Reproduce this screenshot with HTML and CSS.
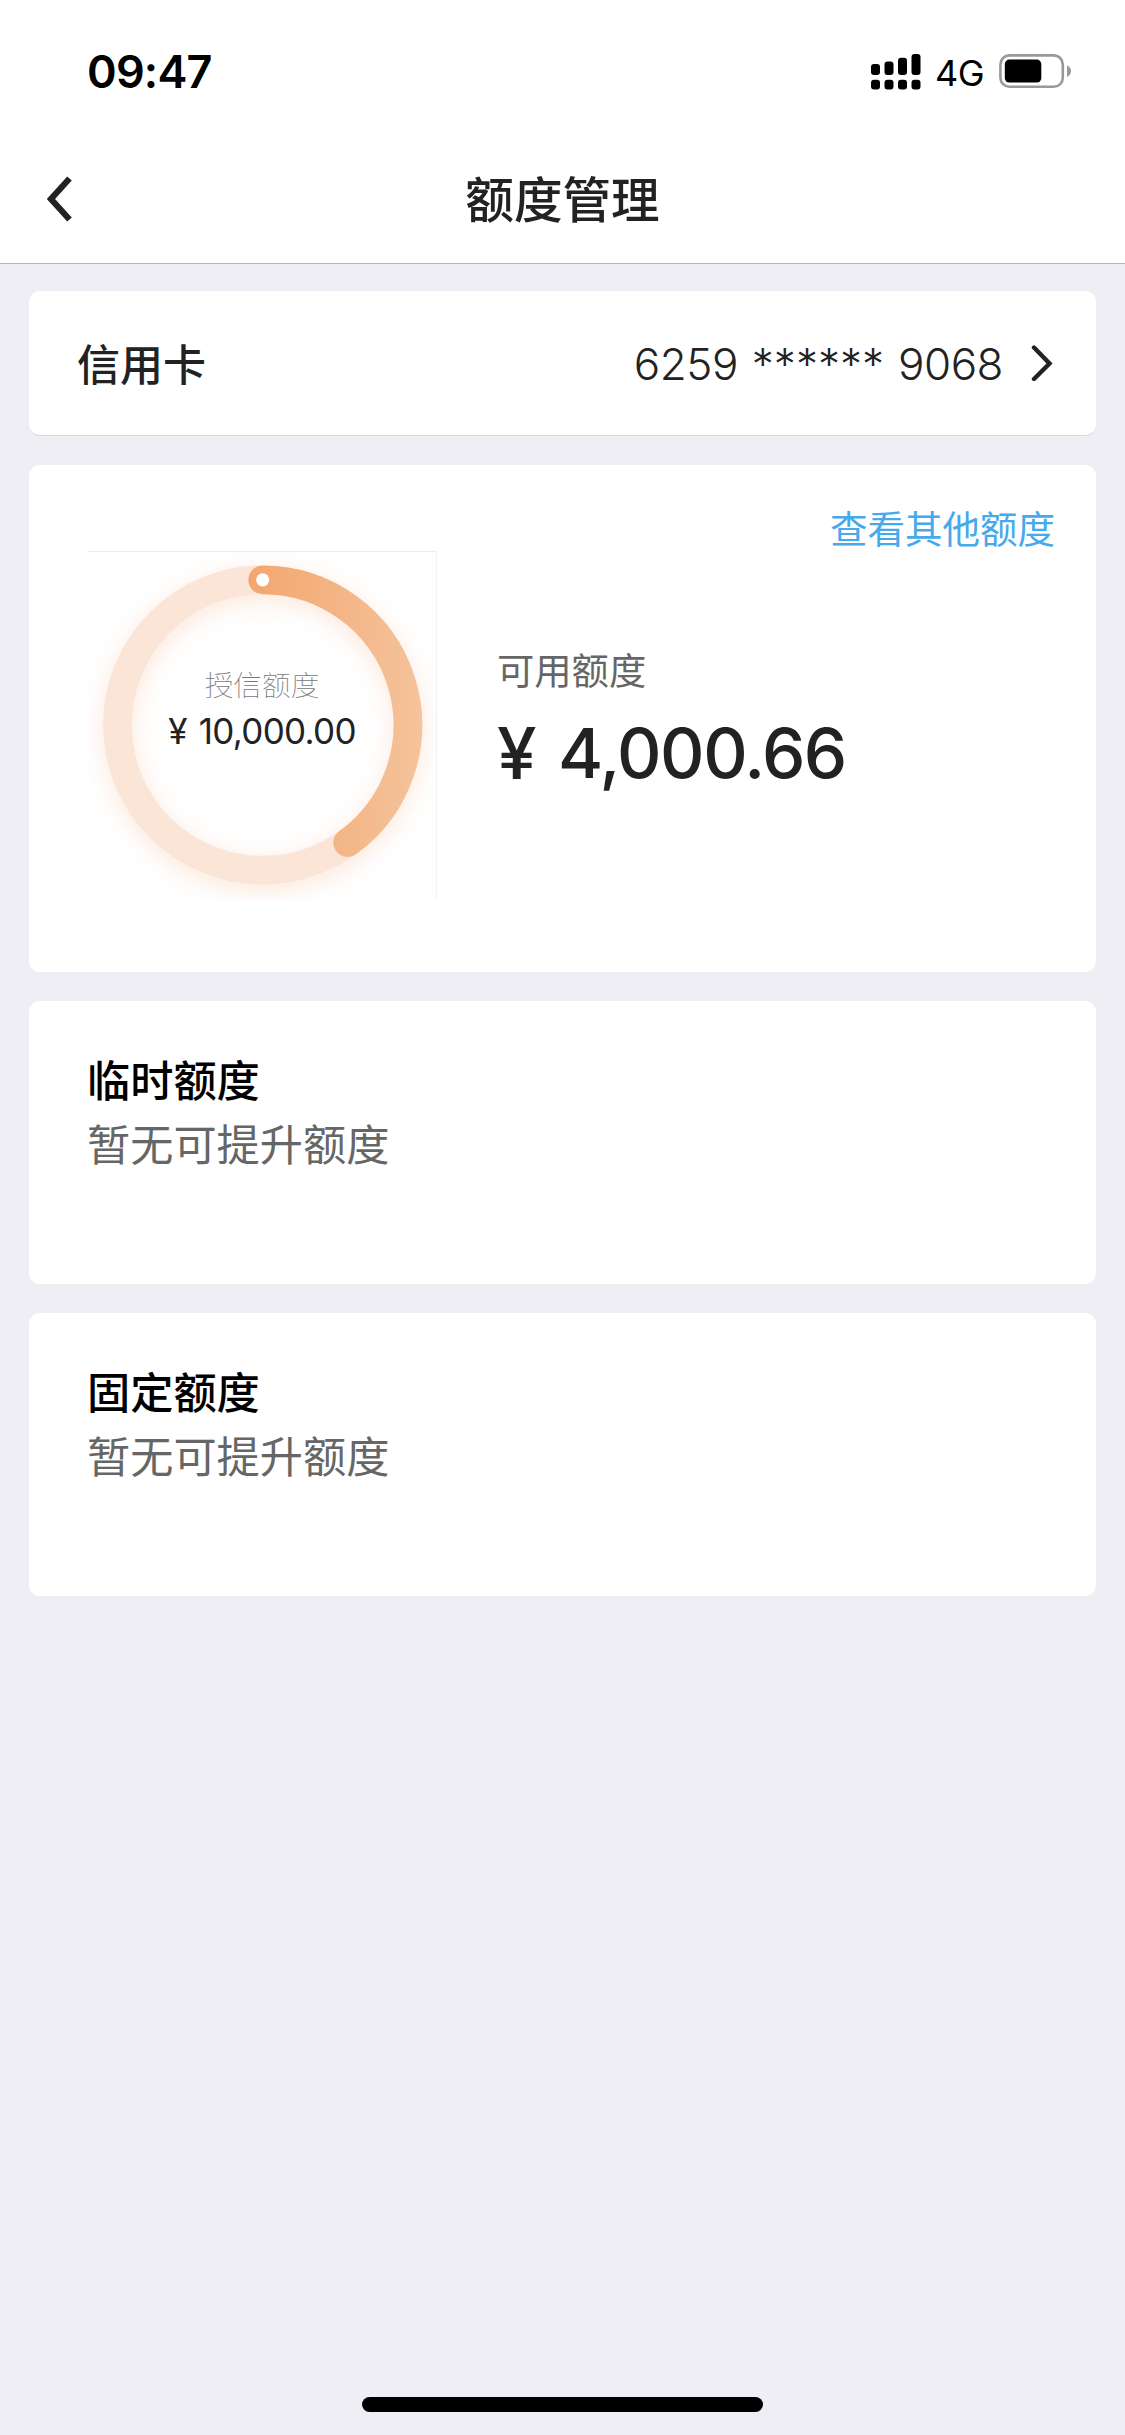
FILE: index.html
```html
<!DOCTYPE html>
<html lang="zh-CN">
<head>
<meta charset="utf-8">
<title>额度管理</title>
<link rel="stylesheet" href="styles.css">
</head>
<body>
<div class="screen">
  <header class="header">
    <div class="status-bar">
      <span class="time">09:47</span>
      <div class="status-icons">
        <svg class="signal" width="50" height="36" viewBox="0 0 50 36">
          <rect x="0" y="10" width="9" height="11" rx="3"/>
          <rect x="13.5" y="7.5" width="9" height="13.5" rx="3"/>
          <rect x="27" y="3.7" width="9" height="17.3" rx="3"/>
          <rect x="40.5" y="0" width="9" height="21" rx="3"/>
          <rect x="0" y="25.7" width="9" height="9.8" rx="3"/>
          <rect x="13.5" y="25.7" width="9" height="9.8" rx="3"/>
          <rect x="27" y="25.7" width="9" height="9.8" rx="3"/>
          <rect x="40.5" y="25.7" width="9" height="9.8" rx="3"/>
        </svg>
        <span class="network">4G</span>
        <svg class="battery" width="73" height="36" viewBox="0 0 73 36">
          <rect x="1.4" y="1.4" width="62.4" height="31.4" rx="9" fill="none" stroke="#999" stroke-width="2.6"/>
          <rect x="5.8" y="5.6" width="36.5" height="23" rx="4.5"/>
          <path d="M68 11.5Q72 13.500 72 17.200T68 23Z" fill="#999"/>
        </svg>
      </div>
    </div>
    <nav class="nav-bar">
      <svg class="back" width="26" height="46" viewBox="0 0 26 46">
        <path d="M22.500 2.500 4 23 22.500 43.500" fill="none" stroke="#222" stroke-width="6.200"/>
      </svg>
      <h1 class="title">额度管理</h1>
    </nav>
  </header>
  <main class="content">
    <section class="card card-select">
      <span class="card-type">信用卡</span>
      <span class="card-number"><span>6259</span><span class="mask">******</span><span>9068</span></span>
      <svg class="chevron" width="22" height="36" viewBox="0 0 22 36">
        <path d="M3 2.500 18.500 18.500 3 34" fill="none" stroke="#222" stroke-width="4.400" stroke-linecap="round"/>
      </svg>
    </section>
    <section class="card limit-card">
      <a class="other-limits">查看其他额度</a>
      <div class="limit-body">
        <div class="gauge">
          <svg class="ring" width="348" height="348" viewBox="0 0 348 348">
            <defs>
              <linearGradient id="used" gradientUnits="userSpaceOnUse" x1="160" y1="0" x2="334" y2="0">
                <stop offset="0" stop-color="#f2a66d"/>
                <stop offset="1" stop-color="#f5c39c"/>
              </linearGradient>
              <filter id="glow" x="-20%" y="-20%" width="140%" height="140%">
                <feGaussianBlur stdDeviation="12"/>
              </filter>
            </defs>
            <circle cx="175" cy="179" r="145.200" fill="none" stroke="#f9c9a9" stroke-opacity=".42" stroke-width="29" filter="url(#glow)"/>
            <circle cx="174.700" cy="173" r="145.200" fill="none" stroke="#fbe5d7" stroke-width="28.700"/>
            <path d="M174.700 27.800A145.200 145.200 0 0 1 259.700 290.700" fill="none" stroke="url(#used)" stroke-width="28.700" stroke-linecap="round"/>
            <circle cx="174.700" cy="27.800" r="6.600" fill="#fff"/>
          </svg>
          <div class="gauge-text">
            <span class="gauge-label">授信额度</span>
            <span class="gauge-value"><span>¥</span><span>10,000.00</span></span>
          </div>
        </div>
        <div class="available">
          <span class="available-label">可用额度</span>
          <span class="available-value"><span class="yen">¥</span><span>4,000.66</span></span>
        </div>
      </div>
    </section>
    <section class="card info-card">
      <h2 class="info-title">临时额度</h2>
      <p class="info-text">暂无可提升额度</p>
    </section>
    <section class="card info-card">
      <h2 class="info-title">固定额度</h2>
      <p class="info-text">暂无可提升额度</p>
    </section>
  </main>
  <div class="home-indicator"></div>
</div>
</body>
</html>
```
FILE: styles.css
```css
* { box-sizing: border-box; }

body {
  margin: 0;
  background: #efeef4;
  color: #222;
  font-family: Inter, "Noto Sans CJK SC", sans-serif;
}

h1, h2, p { margin: 0; }

svg { display: block; flex: none; }

.screen {
  width: 1125px;
  height: 2435px;
  display: flex;
  flex-direction: column;
}

.header {
  height: 264px;
  background: #fff;
  border-bottom: 1px solid #b5b5b7;
}

.status-bar {
  height: 143px;
  padding: 0 53px 0 87px;
  display: flex;
  justify-content: space-between;
  color: #000;
}

.time {
  padding-top: 42px;
  font-size: 45px;
  line-height: 60px;
  font-weight: 600;
  letter-spacing: -0.8px;
}

.status-icons {
  padding-top: 54px;
  display: flex;
  align-items: flex-start;
}

.network {
  width: 49px;
  margin: 0 15px 0 14px;
  font-size: 36px;
  line-height: 38px;
  letter-spacing: -0.5px;
}

.nav-bar {
  height: 112px;
  padding: 0 47px;
  display: grid;
  grid-template-columns: 26px 1fr 26px;
  align-items: center;
}

.title {
  padding-top: 3px;
  text-align: center;
  font-size: 48.600px;
  line-height: 60px;
  font-weight: 500;
}

.content {
  padding: 27px 29px 0;
  display: flex;
  flex-direction: column;
  gap: 29px;
}

.card {
  background: #fff;
  border-radius: 11px;
}

.card-select {
  height: 145px;
  padding: 0 43px 0 48px;
  display: flex;
  align-items: center;
  border-bottom: 1px solid #d9d9de;
}

.card-type {
  margin-right: auto;
  padding-top: 4px;
  font-size: 43px;
  line-height: 60px;
  font-weight: 500;
}

.card-number {
  display: flex;
  gap: 14px;
  margin-right: 28px;
  padding-top: 2px;
  font-size: 44px;
  line-height: 60px;
  font-weight: 350;
  letter-spacing: -0.5px;
}

.mask { letter-spacing: 0; }

.limit-card {
  height: 507px;
  padding: 44px 41px 0 59px;
  display: flex;
  flex-direction: column;
}

.other-limits {
  align-self: flex-end;
  font-size: 37.500px;
  line-height: 42px;
  font-weight: 400;
  color: #45a9ec;
}

.limit-body {
  display: flex;
  gap: 60px;
}

.gauge {
  width: 349px;
  height: 349px;
  display: grid;
  border-top: 1px solid #ededed;
  border-right: 1px solid #f5f3f2;
}

.ring, .gauge-text { grid-area: 1 / 1; }

.gauge-text {
  padding-top: 113px;
  display: flex;
  flex-direction: column;
  align-items: center;
}

.gauge-label {
  font-size: 28.800px;
  line-height: 42px;
  font-weight: 100;
  color: #777;
}

.gauge-value {
  display: flex;
  gap: 12px;
  font-size: 35px;
  line-height: 48px;
  font-weight: 400;
  letter-spacing: -0.7px;
}

.available {
  padding-top: 93px;
  display: flex;
  flex-direction: column;
}

.available-label {
  font-size: 37.300px;
  line-height: 56px;
  font-weight: 400;
  color: #666;
}

.available-value {
  display: flex;
  gap: 23px;
  font-size: 69px;
  line-height: 107px;
  font-weight: 500;
  letter-spacing: -1.500px;
}

.yen { font-size: 71px; }

.info-card {
  height: 283px;
  padding: 48px 58px 0;
}

.info-title {
  font-size: 43.200px;
  line-height: 64px;
  font-weight: 500;
  color: #000;
}

.info-text {
  font-size: 43.200px;
  line-height: 64px;
  font-weight: 400;
  color: #666;
}

.home-indicator {
  width: 401px;
  height: 15px;
  margin: auto auto 23px;
  border-radius: 8px;
  background: #000;
}
```
